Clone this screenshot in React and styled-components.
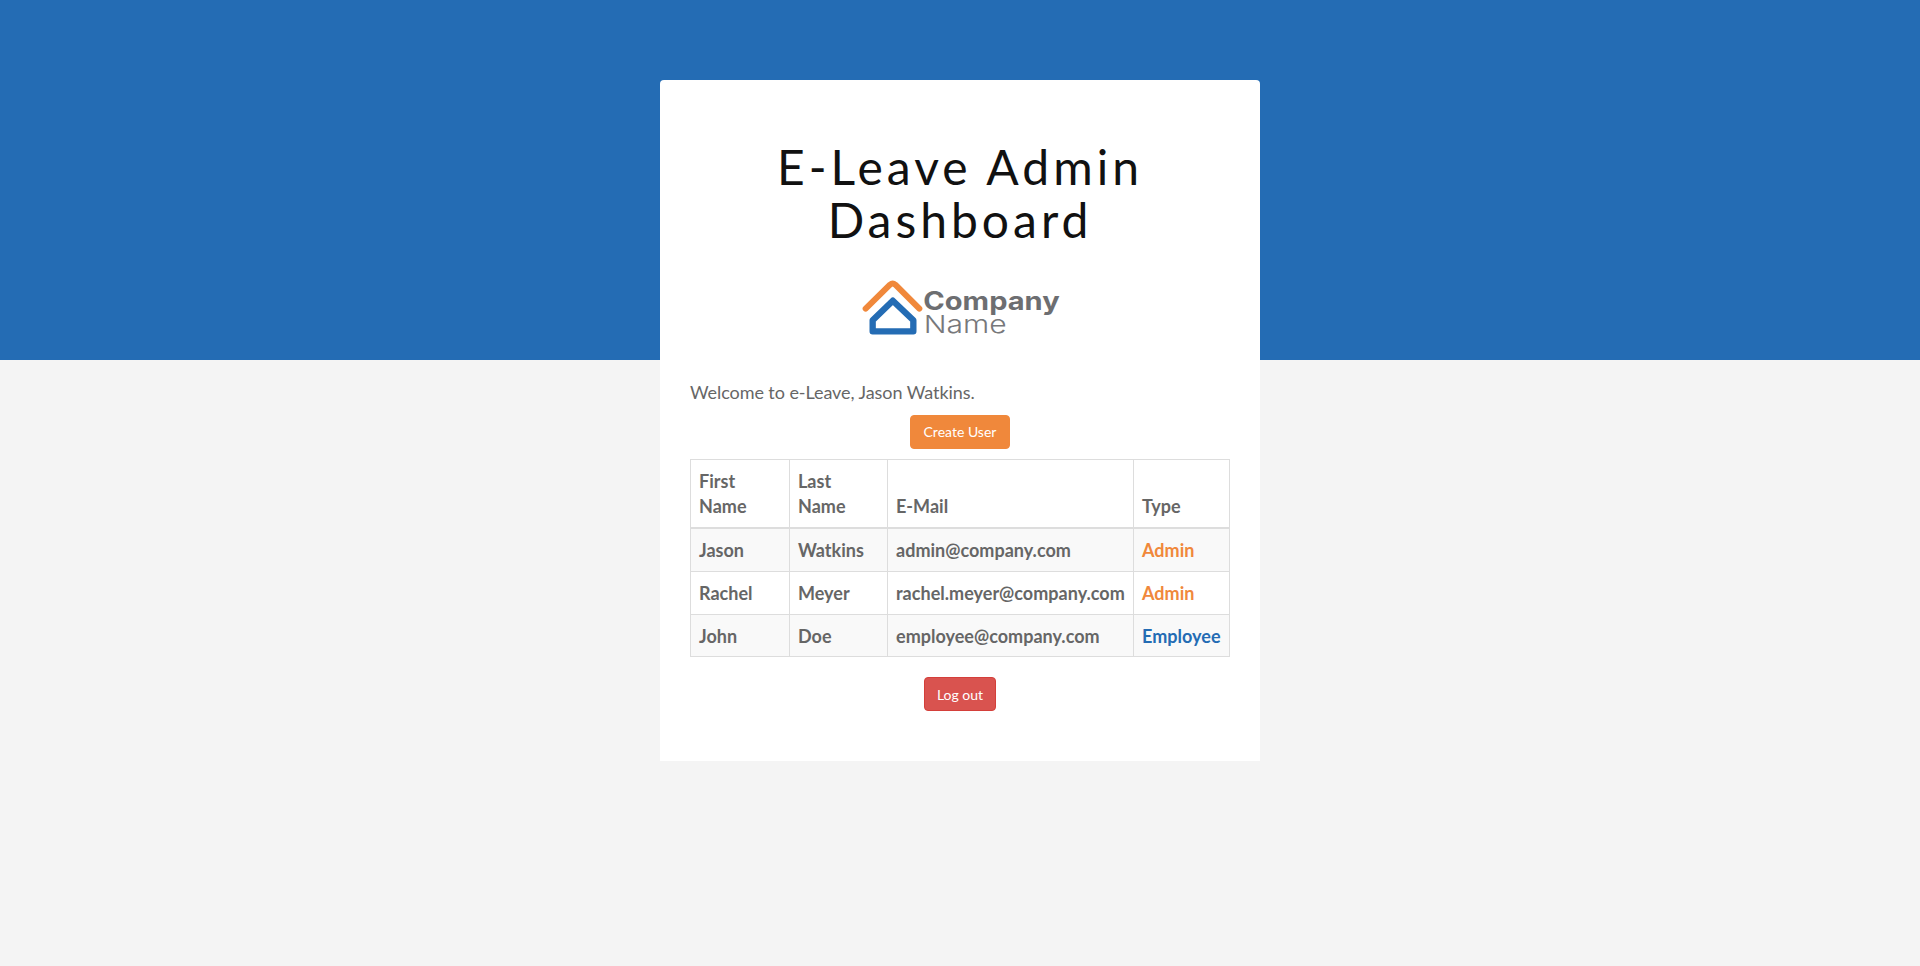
import React from 'react';
import styled, { createGlobalStyle } from 'styled-components';

const GlobalStyle = createGlobalStyle`
  *, *::before, *::after { box-sizing: border-box; }
  body {
    margin: 0;
    background: #f4f4f4;
    color: #666;
    font: 400 18px/1.42857143 Lato, "Liberation Sans", sans-serif;
  }
`;

const Page = styled.div`
  min-height: 966px;
  padding-top: 80px;
  background: linear-gradient(#246cb4 0 360px, #f4f4f4 360px);
`;

const Card = styled.main`
  display: flex;
  flex-direction: column;
  align-items: center;
  width: 600px;
  height: 681px;
  margin: 0 auto;
  padding: 60px 30px 50px;
  background: #fff;
  border-radius: 4px 4px 0 0;
`;

const Title = styled.h1`
  width: 100%;
  height: 106px;
  margin: 0 0 24px;
  color: #111;
  font-size: 48px;
  font-weight: 400;
  line-height: 53px;
  letter-spacing: 4px;
  text-align: center;
`;

const Logo = styled.svg`
  display: block;
  width: 220px;
  height: 75px;
  margin-bottom: 35px;
  font-family: Inter, "Liberation Sans", sans-serif;
`;

const Welcome = styled.p`
  align-self: flex-start;
  height: 26px;
  margin: 0 0 9px;
  letter-spacing: -0.07px;
`;

const Button = styled.button`
  flex: none;
  width: ${(p) => p.$width};
  height: 34px;
  padding: ${(p) => p.$padTop || 0} 0 0;
  border: 1px solid ${(p) => p.$border};
  border-radius: 4px;
  background: ${(p) => p.$fill};
  color: #fff;
  font: 400 14px/20px Lato, "Liberation Sans", sans-serif;
  white-space: nowrap;
`;

const Table = styled.table`
  width: 540px;
  margin: 10px 0 20px;
  border: 1px solid #ddd;
  border-collapse: collapse;
  table-layout: fixed;
  font-weight: 700;
  line-height: 25px;
  letter-spacing: 0.02px;
  text-align: left;
`;

const Column = styled.col`
  width: ${(p) => p.$width};
`;

const HeadCell = styled.th`
  height: 68px;
  padding: 8px;
  border: 1px solid #ddd;
  border-bottom-width: 2px;
  vertical-align: bottom;
`;

const Row = styled.tr`
  height: 43px;
  &:nth-child(odd) { background: #f9f9f9; }
  &:first-child { height: 44px; }
  &:last-child { height: 42px; }
`;

const Cell = styled.td`
  padding: 9px 8px 7px;
  border: 1px solid #ddd;
  vertical-align: top;
  color: ${(p) => p.$color || 'inherit'};
`;

const users = [
  ['Jason', 'Watkins', 'admin@company.com', 'Admin'],
  ['Rachel', 'Meyer', 'rachel.meyer@company.com', 'Admin'],
  ['John', 'Doe', 'employee@company.com', 'Employee'],
];

const typeColors = { Admin: '#f0883b', Employee: '#246cb4' };

export default function App() {
  return (
    <>
      <GlobalStyle />
      <Page>
        <Card>
          <Title>E-Leave Admin Dashboard</Title>
          <Logo viewBox="0 0 660 225" role="img" aria-label="Company Name">
            <path d="M47 116 L120 44 Q128 37 136 44 L208 116" fill="none" stroke="#f0883b" strokeWidth="18" strokeLinecap="round" strokeLinejoin="round" />
            <path d="M128.500 92 L68 151 V184 H190 V151 Z" fill="none" stroke="#246cb4" strokeWidth="19" strokeLinejoin="round" />
            <text x="220" y="119" fill="#6d6e71" fontSize="76" fontWeight="700" textLength="409" lengthAdjust="spacingAndGlyphs">Company</text>
            <text x="221" y="190" fill="#77787b" fontSize="74" fontWeight="300" textLength="249" lengthAdjust="spacingAndGlyphs">Name</text>
          </Logo>
          <Welcome>Welcome to e-Leave, Jason Watkins.</Welcome>
          <Button $width="100px" $fill="#f0883b" $border="#f0883b">Create User</Button>
          <Table>
            <colgroup>
              <Column $width="99px" />
              <Column $width="98px" />
              <Column $width="246px" />
              <Column $width="96px" />
            </colgroup>
            <thead>
              <tr>
                <HeadCell>First Name</HeadCell>
                <HeadCell>Last Name</HeadCell>
                <HeadCell>E-Mail</HeadCell>
                <HeadCell>Type</HeadCell>
              </tr>
            </thead>
            <tbody>
              {users.map(([first, last, email, type]) => (
                <Row key={email}>
                  <Cell>{first}</Cell>
                  <Cell>{last}</Cell>
                  <Cell>{email}</Cell>
                  <Cell $color={typeColors[type]}>{type}</Cell>
                </Row>
              ))}
            </tbody>
          </Table>
          <Button $width="72px" $padTop="1px" $fill="#d9534f" $border="#d43f3a">Log out</Button>
        </Card>
      </Page>
    </>
  );
}
